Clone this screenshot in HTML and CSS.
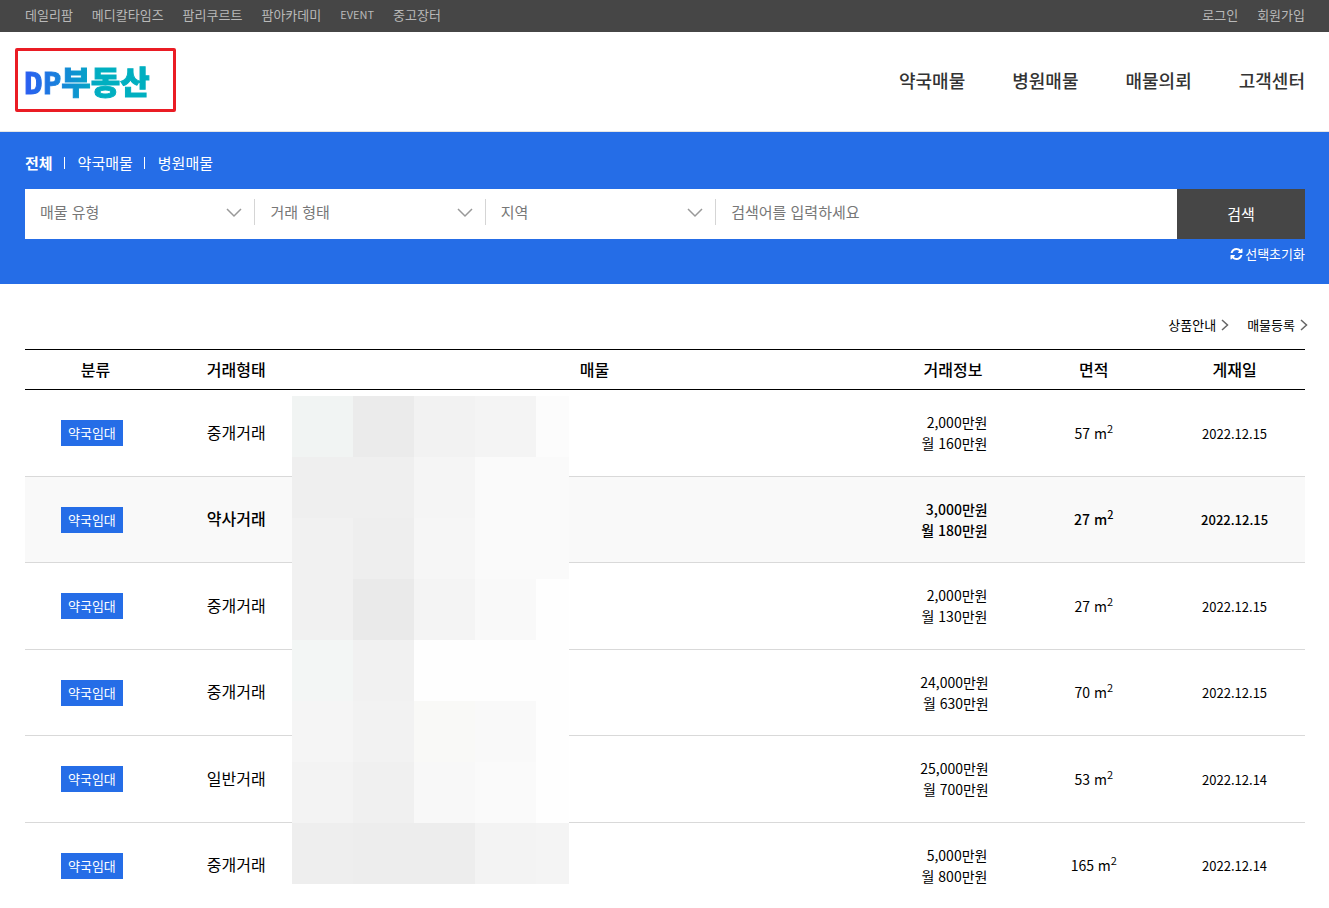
FILE: index.html
```html
<!DOCTYPE html>
<html lang="ko">
<head>
<meta charset="utf-8">
<meta name="viewport" content="width=device-width, initial-scale=1">
<title>DP부동산</title>
<link rel="stylesheet" href="styles.css">
</head>
<body>
<nav class="topbar" aria-label="관련 사이트">
  <div class="topbar-links">
    <a href="#">데일리팜</a>
    <a href="#">메디칼타임즈</a>
    <a href="#">팜리쿠르트</a>
    <a href="#">팜아카데미</a>
    <a class="topbar-latin" href="#">EVENT</a>
    <a href="#">중고장터</a>
  </div>
  <div class="topbar-links">
    <a href="#">로그인</a>
    <a href="#">회원가입</a>
  </div>
</nav>

<header class="header">
  <a class="logo" href="#"><span class="logo-text"><span class="logo-latin">DP</span>부동산</span></a>
  <nav class="menu" aria-label="주 메뉴">
    <a href="#">약국매물</a>
    <a href="#">병원매물</a>
    <a href="#">매물의뢰</a>
    <a href="#">고객센터</a>
  </nav>
</header>

<section class="search">
  <nav class="tabs" aria-label="매물 구분">
    <a class="tab tab-active" href="#">전체</a>
    <a class="tab" href="#">약국매물</a>
    <a class="tab" href="#">병원매물</a>
  </nav>
  <form class="search-form">
    <select class="filter" aria-label="매물 유형"><option>매물 유형</option></select>
    <select class="filter" aria-label="거래 형태"><option>거래 형태</option></select>
    <select class="filter" aria-label="지역"><option>지역</option></select>
    <input class="keyword" type="text" aria-label="검색어" placeholder="검색어를 입력하세요">
    <button class="submit" type="button">검색</button>
  </form>
  <button class="reset" type="button">
    <svg class="reset-icon" viewBox="0 0 1536 1536" aria-hidden="true"><path fill="#fff" d="M1511 928q0 5-1 7-64 268-268 434.500T764 1536q-146 0-282.500-55T238 1324l-129 129q-19 19-45 19t-45-19-19-45V960q0-26 19-45t45-19h448q26 0 45 19t19 45-19 45l-137 137q71 66 161 102t187 36q134 0 250-65t186-179q11-17 53-117 8-23 30-23h192q13 0 22.500 9.500t9.500 22.500zm25-800v448q0 26-19 45t-45 19h-448q-26 0-45-19t-19-45 19-45l138-138Q969 256 768 256q-134 0-250 65T332 500q-11 17-53 117-8 23-30 23H50q-13 0-22.500-9.500T18 608v-7q65-268 270-434.500T768 0q146 0 284 55.500T1297 212l130-129q19-19 45-19t45 19 19 45z"/></svg>
    선택초기화
  </button>
</section>

<main class="content">
  <div class="actions">
    <a href="#">상품안내 <svg class="arrow" viewBox="0 0 8 12" aria-hidden="true"><path d="M1 1l5.500 5L1 11"/></svg></a>
    <a href="#">매물등록 <svg class="arrow" viewBox="0 0 8 12" aria-hidden="true"><path d="M1 1l5.500 5L1 11"/></svg></a>
  </div>
  <div class="listing">
    <table class="table">
      <colgroup><col class="col-small"><col class="col-small"><col class="col-large"><col class="col-small"><col class="col-small"><col class="col-small"></colgroup>
      <thead>
        <tr><th>분류</th><th>거래형태</th><th>매물</th><th>거래정보</th><th>면적</th><th>게재일</th></tr>
      </thead>
      <tbody>
        <tr><td class="type"><span class="badge">약국임대</span></td><td class="deal">중개거래</td><td></td><td class="terms"><div class="price">2,000만원<br>월 160만원</div></td><td>57 m<sup>2</sup></td><td class="date">2022.12.15</td></tr>
        <tr class="featured"><td class="type"><span class="badge">약국임대</span></td><td class="deal">약사거래</td><td></td><td class="terms"><div class="price">3,000만원<br>월 180만원</div></td><td>27 m<sup>2</sup></td><td class="date">2022.12.15</td></tr>
        <tr><td class="type"><span class="badge">약국임대</span></td><td class="deal">중개거래</td><td></td><td class="terms"><div class="price">2,000만원<br>월 130만원</div></td><td>27 m<sup>2</sup></td><td class="date">2022.12.15</td></tr>
        <tr><td class="type"><span class="badge">약국임대</span></td><td class="deal">중개거래</td><td></td><td class="terms"><div class="price">24,000만원<br>월 630만원</div></td><td>70 m<sup>2</sup></td><td class="date">2022.12.15</td></tr>
        <tr><td class="type"><span class="badge">약국임대</span></td><td class="deal">일반거래</td><td></td><td class="terms"><div class="price">25,000만원<br>월 700만원</div></td><td>53 m<sup>2</sup></td><td class="date">2022.12.14</td></tr>
        <tr><td class="type"><span class="badge">약국임대</span></td><td class="deal">중개거래</td><td></td><td class="terms"><div class="price">5,000만원<br>월 800만원</div></td><td>165 m<sup>2</sup></td><td class="date">2022.12.14</td></tr>
      </tbody>
    </table>
    <svg class="mosaic" viewBox="0 0 277 488" shape-rendering="crispEdges" aria-hidden="true">
      <rect width="277" height="488" fill="#fefefe"/>
      <rect width="61" height="61" fill="#f1f4f3"/>
      <rect x="61" width="61" height="61" fill="#ebebeb"/>
      <rect x="122" width="61" height="61" fill="#f2f2f2"/>
      <rect x="183" width="61" height="61" fill="#f4f4f4"/>
      <rect x="244" width="33" height="61" fill="#fcfcfc"/>
      <rect y="61" width="122" height="61" fill="#efefef"/>
      <rect x="122" y="61" width="61" height="61" fill="#f5f5f5"/>
      <rect x="183" y="61" width="94" height="122" fill="#fafafa"/>
      <rect y="122" width="61" height="122" fill="#f1f1f1"/>
      <rect x="61" y="122" width="61" height="61" fill="#eeeeee"/>
      <rect x="122" y="122" width="61" height="61" fill="#f6f6f6"/>
      <rect x="61" y="183" width="61" height="61" fill="#eaeaea"/>
      <rect x="122" y="183" width="61" height="61" fill="#f4f4f4"/>
      <rect x="183" y="183" width="61" height="61" fill="#f9f9f9"/>
      <rect y="244" width="61" height="61" fill="#f3f6f5"/>
      <rect x="61" y="244" width="61" height="61" fill="#f1f1f1"/>
      <rect y="305" width="61" height="61" fill="#f5f5f5"/>
      <rect x="61" y="305" width="61" height="61" fill="#f2f2f2"/>
      <rect x="122" y="305" width="61" height="61" fill="#f9f9f7"/>
      <rect x="183" y="305" width="61" height="61" fill="#f9f9f9"/>
      <rect y="366" width="61" height="61" fill="#f3f3f3"/>
      <rect x="61" y="366" width="61" height="61" fill="#f0f0f0"/>
      <rect x="122" y="366" width="61" height="61" fill="#f8f8f8"/>
      <rect x="183" y="366" width="61" height="61" fill="#fafafa"/>
      <rect y="427" width="61" height="61" fill="#eeeeee"/>
      <rect x="61" y="427" width="122" height="61" fill="#ededed"/>
      <rect x="183" y="427" width="61" height="61" fill="#f3f3f3"/>
      <rect x="244" y="427" width="33" height="61" fill="#f4f4f4"/>
    </svg>
  </div>
</main>
</body>
</html>
```

FILE: styles.css
```css
* {
  box-sizing: border-box;
}

body {
  margin: 0;
  background: #fff;
  color: #000;
  font-family: "Noto Sans CJK KR", sans-serif;
  font-size: 14px;
  line-height: 21px;
}

a {
  color: inherit;
  text-decoration: none;
}

button,
input,
select {
  margin: 0;
  border: 0;
  font: inherit;
}

.topbar {
  display: flex;
  justify-content: space-between;
  align-items: center;
  height: 32px;
  padding: 0 24px 4px 25px;
  background: #464646;
  color: #b9b9b9;
  font-size: 13px;
}

.topbar-links {
  display: flex;
  gap: 19px;
}

.topbar-latin {
  font-size: 11px;
}

.header {
  display: flex;
  justify-content: space-between;
  align-items: center;
  height: 100px;
  padding: 0 24px 3px 15px;
  border-bottom: 1px solid #e5e5e5;
}

.logo {
  display: flex;
  align-items: center;
  width: 161px;
  height: 64px;
  padding: 2px 0 0 6px;
  border: 3px solid #ea1c24;
  border-radius: 2px;
}

.logo-text {
  background: linear-gradient(90deg, #2b5cf2, #00afc0 60%);
  background-clip: text;
  -webkit-background-clip: text;
  color: transparent;
  font-size: 32px;
  font-weight: 900;
  line-height: 40px;
  -webkit-text-stroke: 1px transparent;
}

.logo-latin {
  font-family: "DejaVu Sans Mono", monospace;
  font-size: 31px;
}

.menu {
  display: flex;
  gap: 47px;
  color: #333;
  font-size: 18px;
  font-weight: 500;
}

.search {
  display: flex;
  flex-direction: column;
  height: 152px;
  padding: 20px 24px 0 25px;
  background: #256de7;
  color: #fff;
}

.tabs {
  display: flex;
  align-items: center;
  font-size: 15px;
}

.tab {
  display: flex;
  align-items: center;
}

.tab + .tab::before {
  content: "";
  width: 1px;
  height: 12px;
  margin: 0 13px 0 11px;
  background: #fff;
}

.tab-active {
  font-weight: 700;
}

.search-form {
  display: flex;
  align-items: flex-start;
  height: 50px;
  margin-top: 16px;
  background: #fff;
  font-size: 15px;
}

.filter {
  width: 18%;
  height: 26px;
  margin-top: 10px;
  padding: 0 15px 2px;
  border-right: 1px solid #d5d5d5;
  border-radius: 0;
  appearance: none;
  background: url("data:image/svg+xml,%3Csvg xmlns='http://www.w3.org/2000/svg' width='16' height='10'%3E%3Cpath d='M1 1l7 7 7-7' fill='none' stroke='%23999' stroke-width='1.500'/%3E%3C/svg%3E") no-repeat right 12px top 9px;
  color: #777;
}

.keyword {
  flex: 1;
  min-width: 0;
  height: 26px;
  margin-top: 10px;
  padding: 0 15px 2px;
  background: transparent;
}

.keyword::placeholder {
  color: #777;
}

.submit {
  width: 10%;
  height: 50px;
  padding-bottom: 3px;
  background: #464646;
  color: #fff;
}

.reset {
  display: flex;
  align-items: center;
  align-self: flex-end;
  gap: 2px;
  margin-top: 4px;
  padding: 0;
  background: none;
  color: #fff;
  font-size: 13px;
  line-height: 21px;
}

.reset-icon {
  width: 13px;
  height: 12px;
}

.content {
  padding: 30px 24px 0 25px;
}

.actions {
  display: flex;
  justify-content: flex-end;
  gap: 18px;
  margin-right: -3px;
  font-size: 13px;
}

.actions a {
  display: flex;
  align-items: center;
  gap: 5px;
}

.arrow {
  width: 8px;
  height: 12px;
  fill: none;
  stroke: #666;
  stroke-width: 1.500;
}

.listing {
  position: relative;
  margin-top: 14px;
}

.table {
  width: 100%;
  table-layout: fixed;
  border-spacing: 0;
  text-align: center;
}

.col-small {
  width: 11%;
}

.col-large {
  width: 45%;
}

th,
td {
  padding: 0;
}

th {
  height: 41px;
  border-top: 1px solid #000;
  border-bottom: 1px solid #000;
  font-size: 16px;
  font-weight: 500;
}

td {
  height: 87px;
  border-bottom: 1px solid #d9d9d9;
}

tr:nth-child(even) td {
  height: 86px;
}

.featured {
  background: #f9f9f9;
  font-weight: 500;
}

.type {
  padding-right: 7px;
}

.badge {
  display: inline-block;
  padding: 0 7px;
  background: #256de7;
  color: #fff;
  font-size: 13px;
  font-weight: 400;
  line-height: 26px;
}

.deal {
  padding-bottom: 2px;
  font-size: 16px;
}

.terms {
  padding-left: 3px;
}

.price {
  display: inline-block;
  text-align: right;
}

.date {
  font-size: 13px;
}

sup {
  font-size: 11px;
  line-height: 0;
}

.mosaic {
  position: absolute;
  top: 47px;
  left: 267px;
  width: 277px;
  height: 488px;
}
```
